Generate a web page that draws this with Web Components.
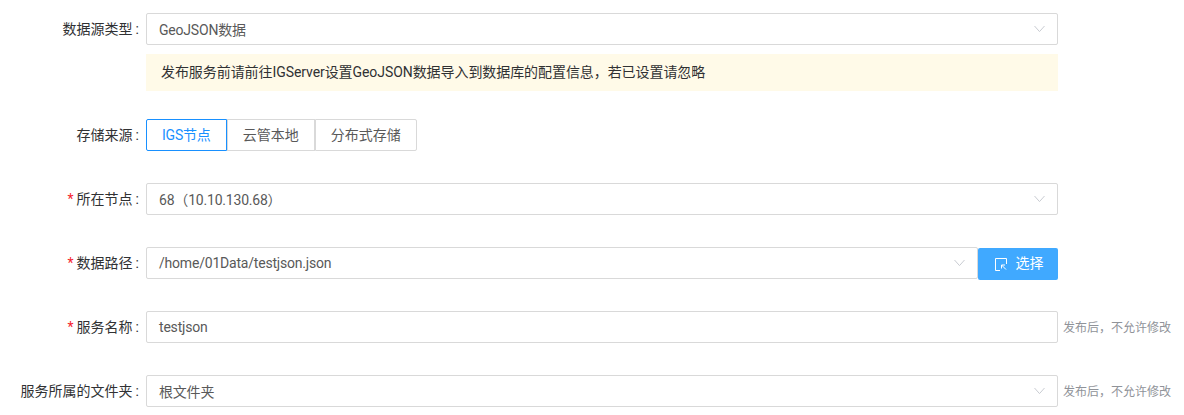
<!DOCTYPE html>
<html lang="zh">
<head>
<meta charset="utf-8">
<title>发布服务</title>
<style>
html, body { margin: 0; background: #fff; }
body { font: 14px Roboto, "Noto Sans CJK SC", sans-serif; }
</style>
</head>
<body>
<publish-form></publish-form>
<script>
(function(){
// Start of enclosed scope

const fontStack = 'Roboto, "Noto Sans CJK SC", sans-serif';

class PfRow extends HTMLElement {
	constructor () {
		super();
		this.attachShadow({mode: 'open'});
		const required = this.hasAttribute('required');
		this.shadowRoot.innerHTML = `<style>
	:host { display: grid; grid-template-columns: 146px 912px auto; margin-bottom: 32px; font-family: ${fontStack}; }
	.label { height: 32px; line-height: 32px; text-align: right; padding-right: 7px; box-sizing: border-box; color: #303133; white-space: nowrap; }
	.star { color: #f5222d; margin-right: 3px; }
	.colon { margin-left: 3px; }
	.tip { font-size: 12px; color: #909399; line-height: 35px; height: 32px; padding-left: 5px; white-space: nowrap; }
</style>
<div class="label">${required ? '<span class="star">*</span>' : ''}${this.getAttribute('label')}<span class="colon">:</span></div>
<div class="control"><slot></slot></div>
<div class="tip"><slot name="tip"></slot></div>`;
	}
}

class PfSelect extends HTMLElement {
	constructor () {
		super();
		this.attachShadow({mode: 'open'});
		this.shadowRoot.innerHTML = `<style>
	:host { display: flex; align-items: center; box-sizing: border-box; height: 32px; flex: 1; min-width: 0; border: 1px solid #d9d9d9; border-radius: 2px; padding: 0 12px; color: #595959; background: #fff; font-family: ${fontStack}; font-size: 14px; letter-spacing: -.2px; }
	.value { flex: 1; }
	svg { display: block; }
</style>
<span class="value"><slot></slot></span>
${this.hasAttribute('plain') ? '' : `<svg width="12" height="8" viewBox="0 0 12 8"><path d="M1.500 1 6.500 6.600 11.500 1" fill="none" stroke="#c9ccd2" stroke-width="1"/></svg>`}`;
	}
}

class PfAlert extends HTMLElement {
	constructor () {
		super();
		this.attachShadow({mode: 'open'});
		this.shadowRoot.innerHTML = `<style>
	:host { display: block; box-sizing: border-box; height: 37px; line-height: 36px; padding-left: 15px; background: #fffae8; color: #303133; font-family: ${fontStack}; font-size: 14px; letter-spacing: -.07px; white-space: nowrap; }
</style><slot></slot>`;
	}
}

class PfRadioGroup extends HTMLElement {
	constructor () {
		super();
		this.attachShadow({mode: 'open'});
		this.shadowRoot.innerHTML = `<style>
	:host { display: flex; font-family: ${fontStack}; font-size: 14px; }
</style><slot></slot>`;
	}
}

class PfRadio extends HTMLElement {
	constructor () {
		super();
		this.attachShadow({mode: 'open'});
		this.shadowRoot.innerHTML = `<style>
	:host { display: block; box-sizing: border-box; height: 32px; line-height: 30px; padding: 0 15px; border: 1px solid #d9d9d9; color: #595959; white-space: nowrap; }
	:host(:first-child) { border-radius: 2px 0 0 2px; }
	:host(:last-child) { border-radius: 0 2px 2px 0; }
	:host([checked]) { border-color: #1890ff; color: #1890ff; letter-spacing: -.2px; }
</style><slot></slot>`;
	}
}

class PfButton extends HTMLElement {
	constructor () {
		super();
		this.attachShadow({mode: 'open'});
		this.shadowRoot.innerHTML = `<style>
	:host { display: flex; flex: none; align-items: center; justify-content: center; gap: 9px; box-sizing: border-box; width: 80px; height: 32px; margin-top: 1px; padding-left: 2px; border-radius: 2px; background: #40a9ff; color: #fff; font-family: ${fontStack}; font-size: 14px; }
	svg { display: block; }
	span { position: relative; top: -2px; }
</style>
<svg width="12" height="13" viewBox="0 0 12 13" fill="none" stroke="#fff" stroke-width="1"><path d="M5 12.500H.5V.5h11v5.500"/><path d="M6.500 7l4.500 4.500"/><path d="M6.500 10.500V7h3.500"/></svg>
<span><slot></slot></span>`;
	}
}

class PublishForm extends HTMLElement {
	constructor () {
		super();
		this.attachShadow({mode: 'open'});
		this.shadowRoot.innerHTML = `<style>
	:host { display: block; padding-top: 13px; height: 402px; overflow: hidden; }
	.alert { margin: -23px 0 28px 146px; width: 912px; }
	.path { display: flex; height: 32px; }
</style>
<pf-row label="数据源类型"><pf-select>GeoJSON数据</pf-select></pf-row>
<pf-alert class="alert">发布服务前请前往IGServer设置GeoJSON数据导入到数据库的配置信息，若已设置请忽略</pf-alert>
<pf-row label="存储来源">
	<pf-radio-group>
		<pf-radio checked>IGS节点</pf-radio>
		<pf-radio>云管本地</pf-radio>
		<pf-radio>分布式存储</pf-radio>
	</pf-radio-group>
</pf-row>
<pf-row label="所在节点" required><pf-select>68（10.10.130.68）</pf-select></pf-row>
<pf-row label="数据路径" required>
	<div class="path"><pf-select>/home/01Data/testjson.json</pf-select><pf-button>选择</pf-button></div>
</pf-row>
<pf-row label="服务名称" required><pf-select plain>testjson</pf-select><span slot="tip">发布后，不允许修改</span></pf-row>
<pf-row label="服务所属的文件夹"><pf-select>根文件夹</pf-select><span slot="tip">发布后，不允许修改</span></pf-row>`;
	}
}

window.customElements.define('pf-row', PfRow);
window.customElements.define('pf-select', PfSelect);
window.customElements.define('pf-alert', PfAlert);
window.customElements.define('pf-radio-group', PfRadioGroup);
window.customElements.define('pf-radio', PfRadio);
window.customElements.define('pf-button', PfButton);
window.customElements.define('publish-form', PublishForm);

// End of enclosed scope
})();
</script>
</body>
</html>
